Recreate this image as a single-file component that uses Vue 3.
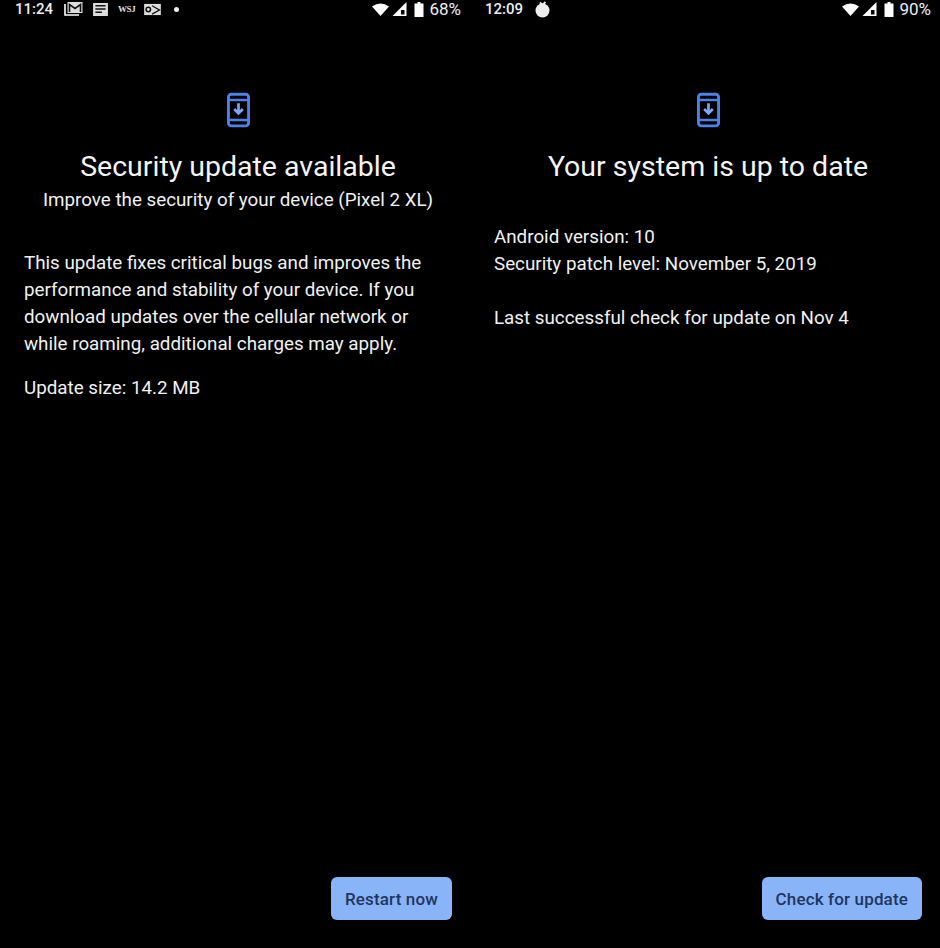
<template>
  <div class="screens">
    <section v-for="s in screens" :key="s.time" class="screen">
      <header class="status">
        <span class="time">{{ s.time }}</span>
        <div class="notifs">
          <template v-if="s.notifs">
            <svg class="n-mail" viewBox="0 0 19 16">
              <path d="M1 3v11h14" fill="none" stroke="#fff" stroke-width="1.6" />
              <path d="M3.5 1h15v11h-15z" fill="#ddd" />
              <path d="M5.5 11V3.5L11 7.5l5.5-4V11" fill="none" stroke="#111" stroke-width="1.6" />
            </svg>
            <svg class="n-news" viewBox="0 0 16 14">
              <path d="M0 0h16v14H0z" fill="#ddd" />
              <path d="M2.5 3h11M2.5 6.5h11M2.5 10h7" stroke="#111" stroke-width="1.5" />
            </svg>
            <span class="n-wsj">WSJ</span>
            <svg class="n-outlook" viewBox="0 0 18 14">
              <path d="M0 1h18v12H0z" fill="#ddd" />
              <circle cx="4.5" cy="7" r="2.4" fill="none" stroke="#111" stroke-width="1.6" />
              <path d="M8.5 3l8 4.5-8 4.5" fill="none" stroke="#111" stroke-width="1.4" />
            </svg>
            <span class="dot"></span>
          </template>
          <svg v-else class="n-drop" viewBox="0 0 16 17">
            <circle cx="8" cy="9.5" r="7" fill="#eee" />
            <path d="M5.5 1.5L8 4l3-3" fill="none" stroke="#eee" stroke-width="1.8" />
          </svg>
        </div>
        <div class="system">
          <svg class="wifi" viewBox="0 0 17 13">
            <path d="M0 3.500Q8.500-2.500 17 3.500L8.500 13z" fill="#fff" />
          </svg>
          <svg class="signal" viewBox="0 0 14 14">
            <path d="M14 0v14H0z" fill="#fff" />
            <path d="M8.500 8h3.500v4.500H8.500z" fill="#000" />
          </svg>
          <svg class="battery" viewBox="0 0 9 15">
            <path d="M3 0h3v1.500h3V15H0V1.500h3z" fill="#fff" />
          </svg>
          <span class="pct">{{ s.battery }}</span>
        </div>
      </header>

      <div class="hero">
        <svg class="update-icon" viewBox="0 0 24 36" fill="none" stroke="#4f80e8">
          <rect x="1.500" y="1.500" width="21" height="33" rx="3" stroke-width="3" />
          <path d="M2 7.500h20M2 28.500h20" stroke-width="2.500" />
          <path d="M12 11v10M7.500 17l4.500 4.500 4.500-4.500" stroke="#7fa6f2" stroke-width="2.800" />
        </svg>
        <h1>{{ s.title }}</h1>
        <p v-if="s.subtitle" class="subtitle">{{ s.subtitle }}</p>
      </div>

      <div class="body" :class="{ compact: !s.subtitle }">
        <p v-for="(para, i) in s.paragraphs" :key="i">
          <span v-for="line in para" :key="line" class="line">{{ line }}</span>
        </p>
      </div>

      <footer class="actions">
        <button type="button">{{ s.action }}</button>
      </footer>
    </section>
  </div>
</template>

<script setup>
const screens = [
  {
    time: '11:24',
    notifs: true,
    battery: '68%',
    title: 'Security update available',
    subtitle: 'Improve the security of your device (Pixel 2 XL)',
    paragraphs: [
      [
        'This update fixes critical bugs and improves the',
        'performance and stability of your device. If you',
        'download updates over the cellular network or',
        'while roaming, additional charges may apply.'
      ],
      ['Update size: 14.2 MB']
    ],
    action: 'Restart now'
  },
  {
    time: '12:09',
    notifs: false,
    battery: '90%',
    title: 'Your system is up to date',
    subtitle: '',
    paragraphs: [
      ['Android version: 10', 'Security patch level: November 5, 2019'],
      ['Last successful check for update on Nov 4']
    ],
    action: 'Check for update'
  }
]
</script>

<style scoped>
.screens {
  display: grid;
  grid-template-columns: 470px 470px;
  height: 948px;
  background: #000;
  color: #f1f1f1;
  font-family: Roboto, "Liberation Sans", sans-serif;
  overflow: hidden;
}
.screen {
  display: flex;
  flex-direction: column;
  height: 948px;
}
.status {
  display: flex;
  align-items: center;
  height: 18px;
  padding: 0 9px 0 15px;
  font-size: 15px;
  font-weight: 500;
  color: #eee;
}
.time {
  width: 49px;
}
.notifs {
  display: flex;
  align-items: center;
  gap: 10px;
  flex: 1;
}
.n-mail { width: 19px; height: 16px; }
.n-news { width: 15px; height: 13px; }
.n-wsj {
  width: 16px;
  font-family: "Liberation Serif", serif;
  font-size: 9px;
  font-weight: 700;
  letter-spacing: -0.4px;
  color: #ddd;
}
.n-outlook { width: 17px; height: 13px; }
.dot {
  width: 5px;
  height: 5px;
  margin-left: 3px;
  border-radius: 50%;
  background: #eee;
}
.n-drop { width: 17px; height: 17px; }
.system {
  display: flex;
  align-items: center;
  gap: 3px;
}
.wifi { width: 17px; height: 13px; }
.signal { width: 15px; height: 14px; }
.battery { width: 10px; height: 15px; margin-left: 4px; }
.pct {
  margin-left: 2px;
  font-size: 17px;
  font-weight: 400;
}

.hero {
  display: flex;
  flex-direction: column;
  align-items: center;
  padding: 74px 0 0 6px;
}
.update-icon {
  width: 23px;
  height: 36px;
}
h1 {
  margin: 21px 0 0;
  font-size: 28.5px;
  line-height: 36px;
  font-weight: 400;
  color: #f4f4f4;
}
.subtitle {
  margin: 2px 0 0;
  font-size: 18.8px;
  line-height: 26px;
}
.body {
  padding: 0 24px;
  margin-top: 37px;
  font-size: 18.8px;
  line-height: 27px;
}
.body.compact {
  margin-top: 39px;
}
.body p {
  margin: 0 0 17px;
}
.body.compact p {
  margin-bottom: 27px;
}
.line {
  display: block;
}
.actions {
  display: flex;
  justify-content: flex-end;
  margin-top: auto;
  padding: 0 18px 28px;
}
button {
  height: 43px;
  padding: 0 14px;
  border: none;
  border-radius: 6px;
  background: #8ab4f8;
  color: #1e3560;
  font-family: inherit;
  font-size: 17px;
  font-weight: 500;
  letter-spacing: 0.15px;
}
</style>
